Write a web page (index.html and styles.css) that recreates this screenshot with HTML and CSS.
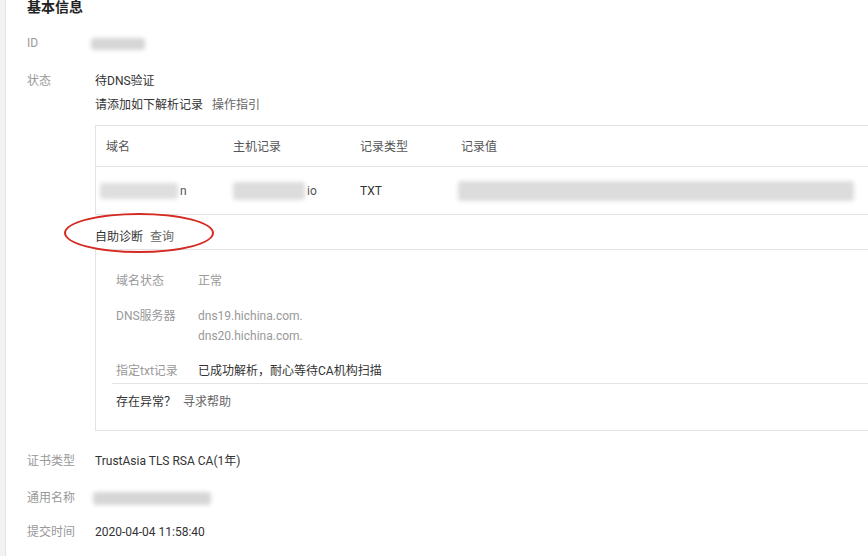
FILE: index.html
```html
<!DOCTYPE html>
<html lang="zh-CN">
<head>
  <meta charset="UTF-8">
  <title>基本信息</title>
  <link rel="stylesheet" href="styles.css">
</head>
<body>
  <div class="side"></div>
  <div class="main">
    <h3 class="title">基本信息</h3>

    <div class="row">
      <div class="label">ID</div>
      <div class="value"><span class="blur blur-id"></span></div>
    </div>

    <div class="row status">
      <div class="label">状态</div>
      <div class="value">
        <div>待DNS验证</div>
        <div>请添加如下解析记录 <a class="link">操作指引</a></div>
      </div>
    </div>

    <div class="record">
      <table>
        <thead>
          <tr>
            <th class="c1">域名</th>
            <th class="c2">主机记录</th>
            <th class="c3">记录类型</th>
            <th>记录值</th>
          </tr>
        </thead>
        <tbody>
          <tr>
            <td><span class="blur blur-domain"></span><span class="tail">n</span></td>
            <td><span class="blur blur-host"></span><span class="tail">io</span></td>
            <td>TXT</td>
            <td><span class="blur blur-val"></span></td>
          </tr>
        </tbody>
      </table>

      <div class="diag">
        <span>自助诊断</span> <a class="link">查询</a>
        <span class="circle"></span>
      </div>

      <div class="check">
        <div class="check-list">
          <div class="k">域名状态</div>
          <div class="v">正常</div>
          <div class="k">DNS服务器</div>
          <div class="v">dns19.hichina.com.<br>dns20.hichina.com.</div>
          <div class="k">指定txt记录</div>
          <div class="v dark">已成功解析，耐心等待CA机构扫描</div>
        </div>
        <div class="help">存在异常？ <a class="link">寻求帮助</a></div>
      </div>
    </div>

    <div class="row info first">
      <div class="label">证书类型</div>
      <div class="value">TrustAsia TLS RSA CA(1年)</div>
    </div>
    <div class="row info">
      <div class="label">通用名称</div>
      <div class="value"><span class="blur blur-name"></span></div>
    </div>
    <div class="row info last">
      <div class="label">提交时间</div>
      <div class="value">2020-04-04 11:58:40</div>
    </div>
  </div>
</body>
</html>
```

FILE: styles.css
```css
html, body {
  margin: 0;
  height: 100%;
  overflow: hidden;
}
body {
  background: #fff;
  color: #333;
  font-family: Roboto, "Noto Sans CJK SC", sans-serif;
  font-size: 12px;
  line-height: 20px;
  display: flex;
}
.side {
  width: 5px;
  flex: none;
  background: #f2f2f2;
  border-right: 1px solid #e4e4e4;
}
.main {
  padding-left: 21px;
  width: 1000px;
  flex: none;
}
.title {
  margin: -3px 0 0;
  font-size: 14px;
  font-weight: bold;
  line-height: 20px;
  color: #222;
}
.row {
  display: flex;
  margin-top: 16px;
}
.label {
  width: 68px;
  flex: none;
  color: #999;
}
.status {
  line-height: 24px;
  margin-top: 16px;
}
.link {
  color: #666;
  margin-left: 6px;
}
.blur {
  display: inline-block;
  vertical-align: middle;
  background: #d6d6d6;
  filter: blur(2px);
  border-radius: 3px;
}
.blur-id { width: 54px; height: 12px; margin-left: -4px; }
.blur-domain { width: 78px; height: 16px; margin-left: -6px; background: #dedede; }
.blur-host { width: 72px; height: 18px; background: #dcdcdc; }
.blur-val { width: 396px; height: 20px; margin-left: -3px; background: #dcdcdc; }
.blur-name { width: 118px; height: 13px; margin-left: -2px; }
.tail { color: #555; margin-left: 2px; }

.record {
  margin: 8px 0 0 68px;
}
table {
  width: 100%;
  border-collapse: collapse;
  border: 1px solid #e3e3e3;
}
th, td {
  text-align: left;
  padding: 0 0 0 10px;
  font-weight: normal;
}
th {
  height: 38px;
  padding-top: 2px;
  color: #555;
  border-bottom: 1px solid #e3e3e3;
}
td {
  height: 47px;
  color: #333;
}
.c1, .c2 { width: 117px; }
.c3 { width: 91px; }

.diag {
  position: relative;
  padding: 12px 0 2px;
}
.diag .link { margin-left: 4px; }
.circle {
  position: absolute;
  left: -31px;
  top: -2px;
  width: 146px;
  height: 36px;
  border: 2px solid #d42a22;
  border-radius: 50%;
}

.check {
  border: 1px solid #e3e3e3;
  padding: 21px 0 18px 20px;
}
.check-list {
  display: grid;
  grid-template-columns: 82px 1fr;
  row-gap: 15px;
  color: #999;
  border-bottom: 1px solid #e3e3e3;
  margin-left: -4px;
  padding-left: 4px;
  padding-bottom: 2px;
}
.check-list .dark { color: #333; }
.help {
  padding-top: 8px;
  color: #333;
}
.help .link { margin-left: 4px; }

.info { margin-top: 17px; }
.info.first { margin-top: 20px; }
.info.last { margin-top: 14px; }
```
